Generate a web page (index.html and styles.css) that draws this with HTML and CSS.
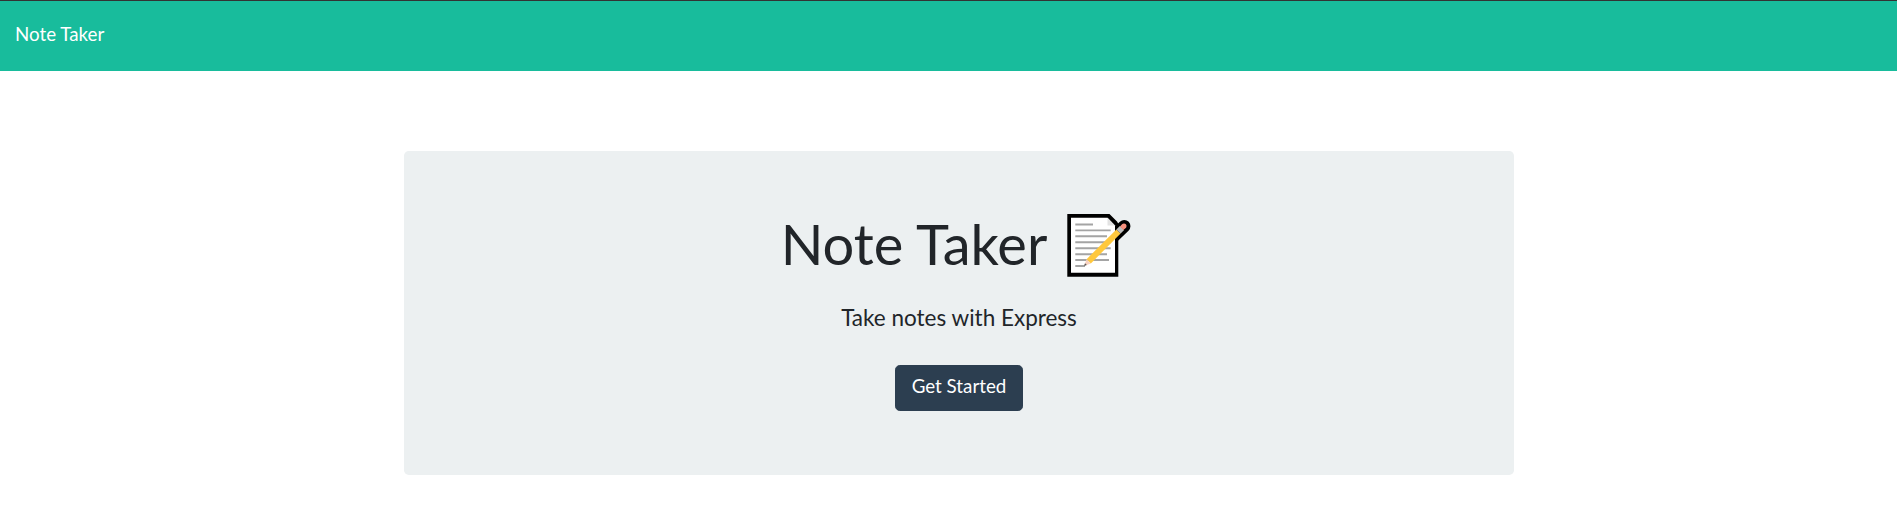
FILE: index.html
```html
<!DOCTYPE html>
<html lang="en">
<head>
<meta charset="utf-8">
<title>Note Taker</title>
<link rel="stylesheet" href="styles.css">
</head>
<body>
<nav class="navbar"><a class="navbar-brand">Note Taker</a></nav>
<main class="container">
<section class="jumbotron">
<h1 class="title"><span>Note Taker</span>
<svg class="memo" viewBox="17 14 64 63" role="img" aria-label="memo">
<path d="M17.300 14H59.500L67 21.500L69.600 26L68.300 40V76.700H17.300Z" fill="#000"/>
<path d="M64 36L74.200 26.200" stroke="#000" stroke-width="12.500" stroke-linecap="round"/>
<path d="M21 17.700H57.500L65 25.500V72.700H21Z" fill="#fff"/>
<path d="M57.500 17.700V25.500H65Z" fill="#e3e3e3"/>
<path d="M25.300 24.500H43M25.300 30.400H60.700M25.300 36.300H57M25.300 42.300H60.700M25.300 48.300H57M25.300 54.200H57M53 48.300H60.700M25.300 60H59M25.300 66H35" stroke="#a4a4a4" stroke-width="1.900"/>
<path d="M38.700 61.300L68.500 31.500" stroke="#ffc83d" stroke-width="6"/>
<path d="M68.500 31.500L72 28" stroke="#bebebe" stroke-width="6"/>
<path d="M71.700 28.300L74 26" stroke="#f8917e" stroke-width="5"/>
<circle cx="74" cy="26" r="2.500" fill="#f8917e"/>
<path d="M34 66L36.600 59.200L40.800 63.400Z" fill="#f7d1c0"/>
<path d="M34 66L35 63.200L36.800 65Z" fill="#555"/>
</svg></h1>
<p class="subtitle">Take notes with Express</p>
<a class="btn">Get Started</a>
</section>
</main>
</body>
</html>
```
FILE: styles.css
```css
* { box-sizing: border-box; }
body {
  margin: 0;
  background: #fff;
  color: #212529;
  font-family: Lato, sans-serif;
  overflow: hidden;
}
.navbar {
  height: 71px;
  padding: 19px 15px;
  border-top: 1px solid #333;
  background: #18bc9c;
}
.navbar-brand {
  display: block;
  color: #fff;
  font-size: 18.75px;
  line-height: 28px;
}
.container {
  width: 1110px;
  margin: 80px 0 0 404px;
}
.jumbotron {
  display: flex;
  flex-direction: column;
  align-items: center;
  height: 324px;
  padding: 59px 32px 64px;
  border-radius: 4.8px;
  background: #ecf0f1;
}
.title {
  display: flex;
  align-items: flex-start;
  gap: 20px;
  margin: 0 0 27px;
  padding-right: 6px;
  font-size: 56px;
  font-weight: 400;
  line-height: 67px;
}
.memo {
  width: 64px;
  height: 63px;
  margin-top: 4px;
}
.subtitle {
  margin: 0 0 auto;
  font-size: 22.5px;
  line-height: 27px;
}
.btn {
  width: 128px;
  padding: 6px 0 10px;
  border: 1px solid #2c3e50;
  border-radius: 4.8px;
  background: #2c3e50;
  color: #fff;
  font-size: 18.75px;
  line-height: 28px;
  text-align: center;
}
```
